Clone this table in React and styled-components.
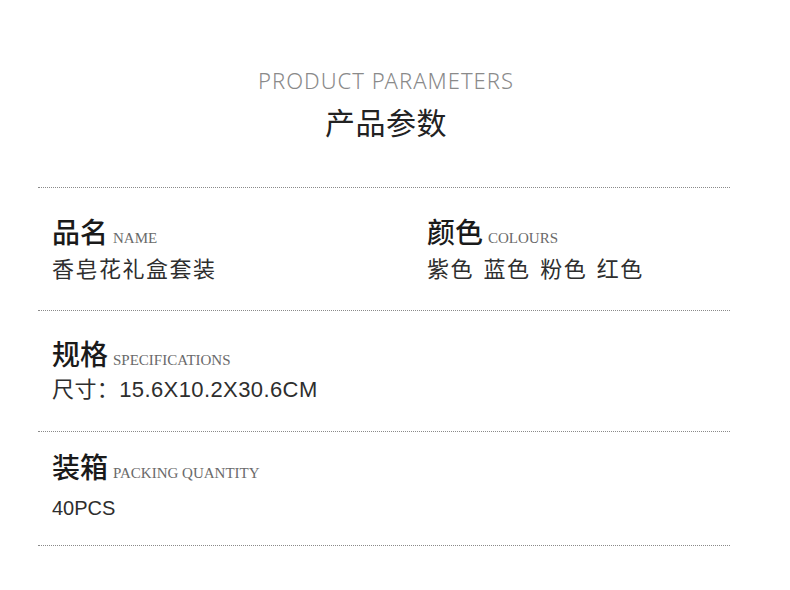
import styled, { createGlobalStyle } from 'styled-components';

const GlobalStyle = createGlobalStyle`
  body {
    margin: 0;
    background: #fff;
    font-family: "Noto Sans CJK SC", "Noto Sans", sans-serif;
  }
`;

const Page = styled.div`
  width: 790px;
  height: 590px;
  background: #fff;
  overflow: hidden;
`;

const Sheet = styled.div`
  width: 692px;
  margin-left: 38px;
`;

const Header = styled.header`
  display: flex;
  flex-direction: column;
  align-items: center;
  padding: 67px 0 48px 4px;
`;

const EnTitle = styled.div`
  font-family: "Noto Sans", sans-serif;
  font-weight: 300;
  font-size: 22px;
  line-height: 26px;
  color: #8a8a8a;
  letter-spacing: 1px;
`;

const CnTitle = styled.h1`
  margin: 10px 0 0;
  font-family: "Noto Sans CJK SC", sans-serif;
  font-weight: 400;
  font-size: 30px;
  line-height: 36px;
  color: #222;
  letter-spacing: 0.5px;
`;

const Section = styled.section`
  border-top: 1px dotted #8a8a8a;
  height: ${p => p.$h}px;
  padding: ${p => p.$pt}px 0 0 14px;
  box-sizing: border-box;
  display: grid;
  grid-template-columns: 375px 1fr;
  align-content: start;
  &:last-child {
    border-bottom: 1px dotted #8a8a8a;
  }
`;

const Field = styled.div`
  display: flex;
  flex-direction: column;
`;

const Label = styled.div`
  display: flex;
  align-items: baseline;
  gap: 5px;
`;

const LabelCn = styled.span`
  font-family: "Noto Sans CJK SC", sans-serif;
  font-weight: 500;
  font-size: 28px;
  line-height: 38px;
  color: #1a1a1a;
`;

const LabelEn = styled.span`
  font-family: "Liberation Serif", serif;
  font-size: 15px;
  color: #6a6a6a;
  text-transform: uppercase;
`;

const Value = styled.div`
  margin-top: ${p => p.$mt}px;
  font-family: "Liberation Sans", "Noto Sans CJK SC", sans-serif;
  font-size: ${p => p.$fs}px;
  line-height: 32px;
  color: #2e2e2e;
  letter-spacing: ${p => p.$ls}px;
  word-spacing: 2px;
`;

const rows = [
  {
    h: 123,
    pt: 24,
    fields: [
      { cn: '品名', en: 'NAME', value: '香皂花礼盒套装', ls: 1.5, fs: 22, mt: 4 },
      { cn: '颜色', en: 'COLOURS', value: '紫色 蓝色 粉色 红色', ls: 1.5, fs: 22, mt: 4 },
    ],
  },
  {
    h: 121,
    pt: 23,
    fields: [{ cn: '规格', en: 'SPECIFICATIONS', value: '尺寸：15.6X10.2X30.6CM', ls: 0.4, fs: 22, mt: 2 }],
  },
  {
    h: 115,
    pt: 15,
    fields: [{ cn: '装箱', en: 'PACKING QUANTITY', value: '40PCS', ls: 0, fs: 20, mt: 7 }],
  },
];

export default function App() {
  return (
    <Page>
      <GlobalStyle />
      <Sheet>
        <Header>
          <EnTitle>PRODUCT PARAMETERS</EnTitle>
          <CnTitle>产品参数</CnTitle>
        </Header>
        {rows.map((row, i) => (
          <Section key={i} $h={row.h} $pt={row.pt}>
            {row.fields.map(f => (
              <Field key={f.cn}>
                <Label>
                  <LabelCn>{f.cn}</LabelCn>
                  <LabelEn>{f.en}</LabelEn>
                </Label>
                <Value $ls={f.ls} $fs={f.fs} $mt={f.mt}>{f.value}</Value>
              </Field>
            ))}
          </Section>
        ))}
      </Sheet>
    </Page>
  );
}
